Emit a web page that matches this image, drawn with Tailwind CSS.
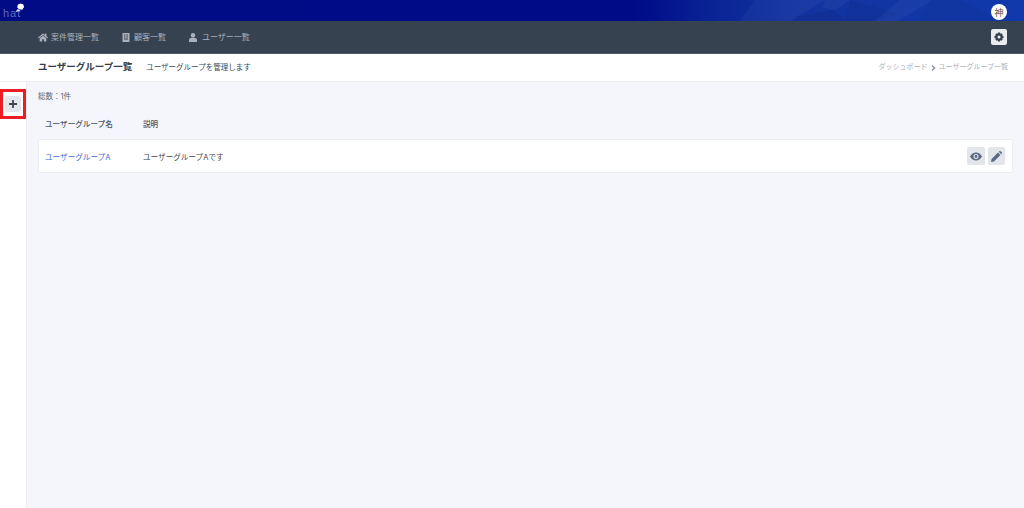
<!DOCTYPE html>
<html lang="ja">
<head>
<meta charset="UTF-8">
<title>ユーザーグループ一覧</title>
<script src="https://cdn.jsdelivr.net/npm/@tailwindcss/browser@4"></script>
</head>
<body class="h-[508px] overflow-hidden bg-[#f4f6fb] font-['Inter','Noto_Sans_CJK_JP',sans-serif]">

<!-- top bar -->
<div class="relative h-[21px] overflow-hidden bg-[linear-gradient(90deg,#000b85_0%,#000b88_62%,#0a2596_70%,#12339f_78%,#1139ac_100%)] flex items-center justify-between">
  <svg class="absolute left-[600px] top-0" width="424" height="21" viewBox="0 0 424 21">
    <polygon points="155,0 225,0 190,21 140,21" fill="#fff" opacity=".035"/>
    <polygon points="225,0 250,0 235,10 222,8" fill="#fff" opacity=".04"/>
    <polygon points="197,16 235,10 245,21 195,21" fill="#000" opacity=".06"/>
    <polygon points="250,0 300,14 272,21 245,21" fill="#000" opacity=".05"/>
    <polygon points="298,21 332,0 300,0 275,21" fill="#fff" opacity=".035"/>
    <polygon points="330,0 360,0 405,21 320,21" fill="#000" opacity=".03"/>
  </svg>
  <span class="relative ml-[3px] mt-[5px] text-[11px] leading-none tracking-[1px] text-[#5f6cc0] font-['Liberation_Sans']">hat</span>
  <svg class="absolute left-[15px] top-[3px]" width="10" height="10" viewBox="0 0 11 11"><path d="M3 2 6 .5 9 1.500 10 4.500 8 7.500 4.500 7 2.500 5z" fill="#fff"/><path d="M.5 10 3 6.500l3 2z" fill="#dfe2f6"/></svg>
  <div class="relative mr-[17px] mt-[3px] w-4 h-4 rounded-full bg-white flex items-center justify-center text-[9px] leading-none text-[#555]">神</div>
</div>

<!-- nav -->
<div class="h-[33px] bg-[#374251] border-b border-[#4d5766] flex items-center justify-between pl-[38px] pr-[17px]">
  <div class="flex items-center gap-[23px] text-[8px] text-[#aab1bc]">
    <a class="flex items-center gap-[3px]">
      <svg width="10" height="9" viewBox="0 0 576 512" fill="#aab1bc"><path d="M280 148L96 300v164c0 9 7 16 16 16l112-.3c9 0 16-7 16-16V368c0-9 7-16 16-16h64c9 0 16 7 16 16v96c0 9 7 16 16 16l112 .3c9 0 16-7 16-16V300L296 148c-4-4-12-4-16 0zM572 251l-84-69V44c0-7-5-12-12-12h-56c-7 0-12 5-12 12v72l-89-74c-18-14-43-14-61 0L4 251c-5 4-6 12-2 17l26 31c4 5 12 6 17 2L280 107c4-4 12-4 16 0l235 194c5 4 13 3 17-2l26-31c4-5 3-13-2-17z"/></svg>
      案件管理一覧
    </a>
    <a class="flex items-center gap-[4px]">
      <svg width="8" height="9" viewBox="0 0 8 9"><path fill-rule="evenodd" d="M.5 0h7v9h-7zM2 1.500v1h1.500v-1zM4.500 1.500v1H6v-1zM2 3.500v1h1.500v-1zM4.500 3.500v1H6v-1zM2 5.500v1h4v-1z" fill="#aab1bc"/></svg>
      顧客一覧
    </a>
    <a class="flex items-center gap-[5px]">
      <svg width="8" height="9" viewBox="0 0 8 9" fill="#aab1bc"><circle cx="4" cy="2.200" r="2.200"/><path d="M0 9V7a2.500 2.500 0 0 1 2.500-2.200h3A2.500 2.500 0 0 1 8 7v2z"/></svg>
      ユーザー一覧
    </a>
  </div>
  <button class="w-4 h-4 rounded-[2px] bg-[#e9ebef] flex items-center justify-center">
    <svg width="10" height="10" viewBox="0 0 10 10"><path fill="#374251" fill-rule="evenodd" d="M4 .5h2l.3 1.300 1-.6 1.500 1.500-.6 1 1.300.3v2l-1.300.3.6 1-1.500 1.500-1-.6L6 9.500H4l-.3-1.300-1 .6-1.500-1.500.6-1L.5 6V4l1.300-.3-.6-1 1.500-1.500 1 .6zM5 3.500a1.500 1.500 0 1 0 0 3 1.500 1.500 0 0 0 0-3z"/></svg>
  </button>
</div>

<!-- page title -->
<div class="h-[28px] bg-white border-b border-[#eceef2] flex items-center justify-between pl-[38px] pr-[16px]">
  <div class="flex items-center gap-[14px]">
    <h1 class="text-[9.500px] font-bold text-[#333c48]">ユーザーグループ一覧</h1>
    <p class="text-[7.500px] text-[#3b4656]">ユーザーグループを管理します</p>
  </div>
  <div class="flex items-center gap-[3px] text-[7px] text-[#a9aeb8]">
    ダッシュボード
    <svg width="5" height="6" viewBox="0 0 5 6"><path d="M1 .5L3.500 3 1 5.500" fill="none" stroke="#8d939e" stroke-width="1.500"/></svg>
    ユーザーグループ一覧
  </div>
</div>

<div class="flex h-[426px]">
  <!-- side actions -->
  <div class="relative w-[27px] shrink-0 bg-white border-r border-[#eceef2] pt-[14px] pl-[5px]">
    <button class="w-4 h-4 rounded-[2px] bg-[#e4e6eb] flex items-center justify-center">
      <svg width="8" height="8" viewBox="0 0 8 8"><path d="M3.100 0h1.800v3.100H8v1.800H4.900V8H3.100V4.900H0V3.100h3.100z" fill="#3f4753"/></svg>
    </button>
    <div class="absolute left-0 top-[7px] w-[26px] h-[30px] border-[3px] border-[#ee1c25]"></div>
  </div>

  <!-- list -->
  <div class="flex-1 pl-[11px] pr-[11px]">
    <p class="mt-[10px] text-[7.500px] leading-[10px] text-[#5d6673]">総数：1件</p>
    <div class="mt-[17px] flex pl-[7px] text-[7.600px] leading-[12px] font-medium text-[#4a5462]">
      <div class="w-[98px]">ユーザーグループ名</div>
      <div>説明</div>
    </div>
    <div class="mt-[8px] h-[34px] bg-white border border-[#eceef2] rounded-[2px] flex items-center pl-[6px] pr-[7px] text-[7.600px]">
      <a class="w-[98px] pt-[3px] text-[#3f6ad8]">ユーザーグループA</a>
      <span class="flex-1 pt-[3px] text-[#3b4656]">ユーザーグループAです</span>
      <div class="flex gap-[3px]">
        <button class="w-[18px] h-[18px] rounded-[2px] bg-[#e2e5ea] flex items-center justify-center">
          <svg width="12" height="9" viewBox="0 0 12 9"><path fill="#5b6b85" fill-rule="evenodd" d="M0 4.500C1.500 1.700 3.500.5 6 .5s4.500 1.200 6 4c-1.500 2.800-3.500 4-6 4s-4.500-1.200-6-4zM6 2a2.500 2.500 0 1 0 0 5 2.500 2.500 0 0 0 0-5z"/><circle cx="6" cy="4.500" r="1.400" fill="#5b6b85"/></svg>
        </button>
        <button class="w-[17px] h-[18px] rounded-[2px] bg-[#e2e5ea] flex items-center justify-center">
          <svg width="11" height="11" viewBox="0 0 11 11"><path fill="#5b6b85" d="M0 11l.6-3L7 1.600 9.400 4 3 10.400zM7.800.8l.6-.6a.8.8 0 0 1 1.100 0l1.300 1.300a.8.8 0 0 1 0 1.100l-.6.6z"/></svg>
        </button>
      </div>
    </div>
  </div>
</div>
</body>
</html>
